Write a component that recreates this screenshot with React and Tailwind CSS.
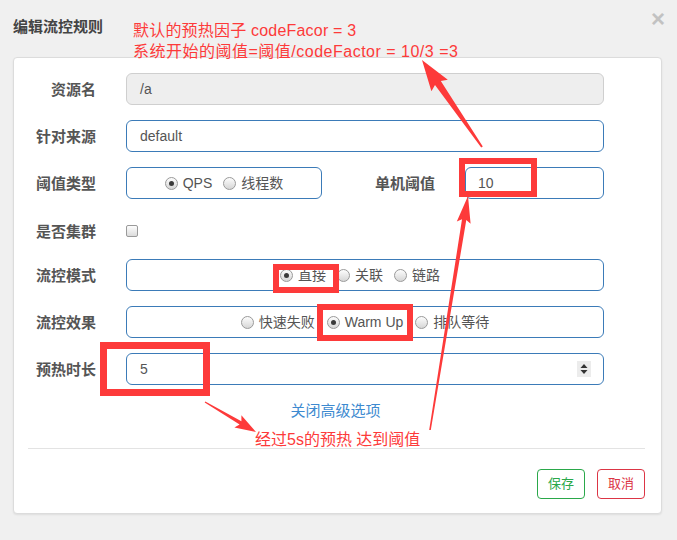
import React from "react";

const sans = "font-['Liberation_Sans','Noto_Sans_CJK_SC',sans-serif]";

function Radio({ checked }) {
  return (
    <span className="w-[13px] h-[13px] rounded-full border border-[#9a9a9a] bg-linear-to-b from-[#fdfdfd] to-[#d6d6d6] flex items-center justify-center shrink-0">
      {checked && <span className="w-[5px] h-[5px] rounded-full bg-[#3a3a3a]" />}
    </span>
  );
}

function RadioItem({ checked, label }) {
  return (
    <span className="flex items-center gap-[5px]">
      <Radio checked={checked} />
      <span className="text-[14px] text-[#555] leading-[20px]">{label}</span>
    </span>
  );
}

function Label({ children, w = "w-[82px]" }) {
  return (
    <div className={`${w} shrink-0 text-right text-[15px] font-bold text-[#555] leading-[20px] mt-[2px]`}>{children}</div>
  );
}

function arrow(tail, tip, H, Wh, ws, wt) {
  const dx = tip[0] - tail[0];
  const dy = tip[1] - tail[1];
  const len = Math.hypot(dx, dy);
  const ux = dx / len, uy = dy / len;
  const nx = -uy, ny = ux;
  const bx = tip[0] - ux * H, by = tip[1] - uy * H;
  const pts = [
    [tail[0] + nx * wt, tail[1] + ny * wt],
    [bx + nx * ws, by + ny * ws],
    [bx + nx * Wh - ux * 3, by + ny * Wh - uy * 3],
    tip,
    [bx - nx * Wh - ux * 3, by - ny * Wh - uy * 3],
    [bx - nx * ws, by - ny * ws],
    [tail[0] - nx * wt, tail[1] - ny * wt],
  ];
  return pts.map((p) => p[0].toFixed(1) + "," + p[1].toFixed(1)).join(" ");
}

export default function App() {
  const inputBox = "h-[32px] rounded-[6px] border border-[#3b7bb8] bg-white";
  return (
    <div className={`relative w-[677px] h-[540px] bg-[#f0f0f0] overflow-hidden ${sans}`}>
      {/* header */}
      <div className="pt-[16px] pl-[13px] pr-[12px] flex items-start justify-between">
        <div className="text-[15px] font-bold text-[#444] leading-[20px] mt-[1px]">编辑流控规则</div>
        <div className="-mt-[12px] text-[24px] font-bold text-[#c2c2c2] leading-[30px]">×</div>
      </div>

      {/* card */}
      <div className="mt-[20px] ml-[13px] w-[649px] h-[457px] bg-white border border-[#dcdcdc] rounded-[4px] shadow-[0_1px_2px_rgba(0,0,0,0.08)] pt-[15px] flex flex-col">
        {/* row 1 */}
        <div className="flex items-center">
          <Label>资源名</Label>
          <div className="ml-[30px] w-[478px] h-[32px] rounded-[6px] border border-[#cfcfcf] bg-[#eeeeee] flex items-center pl-[13px] text-[14px] text-[#555]">/a</div>
        </div>
        {/* row 2 */}
        <div className="flex items-center mt-[15px]">
          <Label>针对来源</Label>
          <div className={`ml-[30px] w-[478px] ${inputBox} flex items-center pl-[13px] text-[14px] text-[#555]`}>default</div>
        </div>
        {/* row 3 */}
        <div className="flex items-center mt-[15px]">
          <Label>阈值类型</Label>
          <div className={`ml-[30px] w-[196px] ${inputBox} flex items-center justify-center gap-[11px]`}>
            <RadioItem checked label="QPS" />
            <RadioItem label="线程数" />
          </div>
          <Label w="w-[113px]">单机阈值</Label>
          <div className={`ml-[30px] w-[139px] ${inputBox} flex items-center pl-[12px] text-[14px] text-[#555]`}>10</div>
        </div>
        {/* row 4 */}
        <div className="flex items-center mt-[20px] h-[24px]">
          <Label>是否集群</Label>
          <div className="ml-[30px] w-[12px] h-[12px] rounded-[2px] border border-[#9a9a9a] bg-linear-to-b from-[#fdfdfd] to-[#dcdcdc]" />
        </div>
        {/* row 5 */}
        <div className="flex items-center mt-[16px]">
          <Label>流控模式</Label>
          <div className={`ml-[30px] w-[478px] ${inputBox} flex items-center justify-center gap-[11px] pr-[10px]`}>
            <RadioItem checked label="直接" />
            <RadioItem label="关联" />
            <RadioItem label="链路" />
          </div>
        </div>
        {/* row 6 */}
        <div className="flex items-center mt-[15px]">
          <Label>流控效果</Label>
          <div className={`ml-[30px] w-[478px] ${inputBox} flex items-center justify-center gap-[12px]`}>
            <RadioItem label="快速失败" />
            <RadioItem checked label="Warm Up" />
            <RadioItem label="排队等待" />
          </div>
        </div>
        {/* row 7 */}
        <div className="flex items-center mt-[15px]">
          <Label>预热时长</Label>
          <div className={`ml-[30px] w-[478px] ${inputBox} flex items-center justify-between pl-[13px] pr-[12px] text-[14px] text-[#555]`}>
            <span>5</span>
            <span className="w-[14px] h-[16px] bg-[#ececec] flex items-center justify-center">
              <svg width="8" height="12" viewBox="0 0 8 12">
                <polygon points="4,1 7.5,5 0.5,5" fill="#333" />
                <polygon points="0.5,7 7.5,7 4,11" fill="#333" />
              </svg>
            </span>
          </div>
        </div>
        {/* link */}
        <div className="mt-[16px] text-center text-[15px] leading-[20px] text-[#3d8ad0] pr-[4px]">关闭高级选项</div>
        {/* divider */}
        <div className="mt-[27px] ml-[14px] mr-[16px] h-px bg-[#e3e3e3]" />
        {/* buttons */}
        <div className="mt-[20px] flex justify-end gap-[12px] pr-[16px]">
          <div className="w-[48px] h-[30px] rounded-[4px] border border-[#2aa84a] text-[#2aa84a] text-[13px] flex items-center justify-center">保存</div>
          <div className="w-[48px] h-[30px] rounded-[4px] border border-[#dc3545] text-[#dc3545] text-[13px] flex items-center justify-center">取消</div>
        </div>
      </div>

      {/* annotations */}
      <div className="absolute left-[133px] top-[20px] text-[16px] leading-[21px] text-[#fd3a3a] whitespace-nowrap">
        <div className="tracking-[0.2px]">默认的预热因子 codeFacor = 3</div>
        <div className="tracking-[0.5px]">系统开始的阈值=阈值/codeFactor = 10/3 =3</div>
      </div>
      <div className="absolute left-[255px] top-[430px] text-[16px] leading-[20px] text-[#fd3a3a] whitespace-nowrap">经过5s的预热 达到阈值</div>

      <div className="absolute left-[459px] top-[158px] w-[78px] h-[39px] border-[6px] border-[#fd3a3a]" />
      <div className="absolute left-[273px] top-[264px] w-[66px] h-[29px] border-[6px] border-[#fd3a3a]" />
      <div className="absolute left-[317px] top-[304px] w-[96px] h-[37px] border-[6px] border-[#fd3a3a]" />
      <div className="absolute left-[100px] top-[342px] w-[110px] h-[54px] border-[7px] border-[#fd3a3a]" />

      <svg className="absolute left-0 top-0 pointer-events-none" width="677" height="540">
        <polygon points={arrow([482, 147], [422, 60], 28, 10, 3.5, 1)} fill="#fd3a3a" />
        <polygon points={arrow([430, 430], [468, 196], 24, 7, 2.2, 0.8)} fill="#fd3a3a" />
        <polygon points={arrow([205, 402], [256, 432], 18, 7, 1.8, 0.6)} fill="#fd3a3a" />
      </svg>
    </div>
  );
}
